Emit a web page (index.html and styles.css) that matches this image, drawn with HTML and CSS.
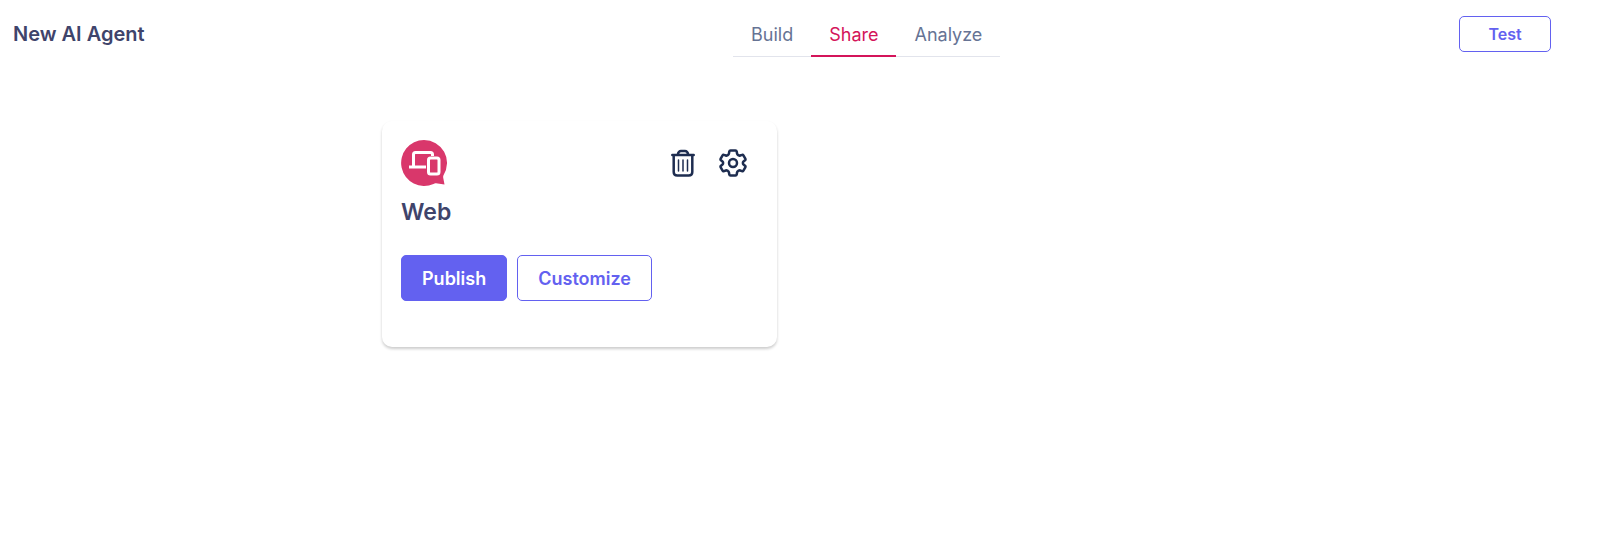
FILE: index.html
```html
<!DOCTYPE html>
<html lang="en">
<head>
<meta charset="utf-8">
<meta name="viewport" content="width=device-width, initial-scale=1">
<title>New AI Agent</title>
<link rel="stylesheet" href="styles.css">
</head>
<body>
<header class="topbar">
  <h1 class="topbar-title">New AI Agent</h1>
  <nav class="tabs" aria-label="Agent sections">
    <a class="tab" href="#build">Build</a>
    <a class="tab tab-active" href="#share" aria-current="page">Share</a>
    <a class="tab" href="#analyze">Analyze</a>
  </nav>
  <button class="btn btn-outline btn-test" type="button">Test</button>
</header>
<main class="channels">
  <section class="card">
    <div class="card-head">
      <svg class="channel-icon" viewBox="0 0 46 46" aria-hidden="true">
        <path fill="#d9376b" d="M23 0a23 23 0 0 1 19.5 35.200q-.6 1.400-.2 3L43.500 44.600l-8.500-1.300q-1.200-.2-2.500.7A23 23 0 1 1 23 0z"/>
        <g fill="none" stroke="#fff" stroke-width="3" stroke-linejoin="round">
          <path d="M8 27H25M12.500 27V14.500Q12.500 12.500 14.500 12.500H29.500Q31.500 12.500 31.500 14.500V16"/>
          <rect x="27.500" y="18" width="10.500" height="16" rx="2"/>
        </g>
      </svg>
      <div class="card-tools">
        <button class="icon-btn" type="button" aria-label="Delete">
          <svg class="icon" viewBox="0 0 28 28" aria-hidden="true">
            <g fill="none" stroke="#1e2d50" stroke-linecap="round" stroke-linejoin="round">
              <path stroke-width="2.500" d="M3.300 6H24.700M4.700 6.500V23Q4.700 26.500 8.200 26.500H19.800Q23.300 26.500 23.300 23V6.500M8.800 5.500Q9.500 2 12 2H16Q18.500 2 19.200 5.500"/>
              <path stroke-width="1.500" d="M9.500 11V22M14 11V22M18.500 11V22"/>
            </g>
          </svg>
        </button>
        <button class="icon-btn" type="button" aria-label="Settings">
          <svg class="icon" viewBox="0 0 28 28" aria-hidden="true">
            <g fill="none" stroke="#1e2d50" stroke-width="2.500" stroke-linejoin="round">
              <path d="M11.500 1.500h5q1 0 1.200 1l.4 2.200q.1.800.8 1.200l.8.500q.7.400 1.500.1l1.700-.6q1-.4 1.500.5l1.900 3.300q.5.900-.3 1.600l-1.500 1.200q-.6.500-.6 1.200v.6q0 .7.600 1.200l1.500 1.200q.8.700.3 1.600l-1.900 3.300q-.5.900-1.500.5l-1.700-.6q-.8-.3-1.500.1l-.8.500q-.7.400-.8 1.200l-.4 2.200q-.2 1-1.200 1h-5q-1 0-1.200-1l-.4-2.200q-.1-.8-.8-1.200l-.8-.5q-.7-.4-1.500-.1l-1.700.6q-1 .4-1.500-.5l-1.900-3.300q-.5-.9.300-1.600l1.500-1.200q.6-.5.600-1.200v-.6q0-.7-.6-1.200L2 11.300q-.8-.7-.3-1.600l1.900-3.300q.5-.9 1.500-.5l1.700.6q.8.300 1.500-.1l.8-.5q.7-.4.8-1.200l.4-2.200q.2-1 1.200-1z"/>
              <circle cx="14" cy="14" r="4"/>
            </g>
          </svg>
        </button>
      </div>
    </div>
    <h2 class="card-title">Web</h2>
    <div class="card-actions">
      <button class="btn btn-primary" type="button">Publish</button>
      <button class="btn btn-outline" type="button">Customize</button>
    </div>
  </section>
</main>
</body>
</html>
```
FILE: styles.css
```css
* {
  box-sizing: border-box;
}

body {
  min-height: 100vh;
  margin: 0;
  background: #fff;
  color: #3f446b;
  font-family: Inter, "Open Sans", sans-serif;
}

.topbar {
  display: grid;
  grid-template-columns: 17fr auto 13fr;
  align-items: start;
  padding: 12px 49px 0 13px;
}

.topbar-title {
  margin: 0;
  padding-top: 8px;
  font-size: 20px;
  line-height: 28px;
  font-weight: 600;
}

.tabs {
  display: flex;
  border-bottom: 1px solid #e2e4ec;
}

.tab {
  margin-bottom: -1px;
  padding: 8px 18px 6px;
  border-bottom: 2px solid transparent;
  color: #667394;
  font-size: 18px;
  line-height: 29px;
  text-decoration: none;
}

.tab-active {
  border-color: #d4145a;
  color: #d4145a;
}

.btn {
  height: 46px;
  padding: 0 20px;
  border: 1px solid #6361f0;
  border-radius: 5px;
  font-family: inherit;
  font-size: 18px;
  font-weight: 600;
  cursor: pointer;
}

.btn-primary {
  background: #6361f0;
  color: #fff;
}

.btn-outline {
  background: #fff;
  color: #6361f0;
}

.btn-test {
  justify-self: end;
  width: 92px;
  height: 36px;
  margin-top: 4px;
  font-size: 16px;
}

.channels {
  display: grid;
  grid-template-columns: repeat(2, 1fr);
  gap: 46px;
  max-width: 836px;
  margin: 64px auto 0;
}

.card {
  padding: 19px 30px 46px 19px;
  border-radius: 10px;
  background: #fff;
  box-shadow: 0 2px 3px rgba(0, 0, 0, 0.2);
}

.card-head {
  display: flex;
  align-items: center;
  justify-content: space-between;
}

.channel-icon {
  width: 46px;
  height: 46px;
}

.card-tools {
  display: flex;
  gap: 22px;
}

.icon-btn {
  display: flex;
  padding: 0;
  border: 0;
  background: none;
  cursor: pointer;
}

.icon {
  width: 28px;
  height: 28px;
}

.card-title {
  margin: 10px 0 27px;
  font-size: 23px;
  line-height: 32px;
  font-weight: 600;
}

.card-actions {
  display: flex;
  flex-wrap: wrap;
  gap: 10px;
}
```
